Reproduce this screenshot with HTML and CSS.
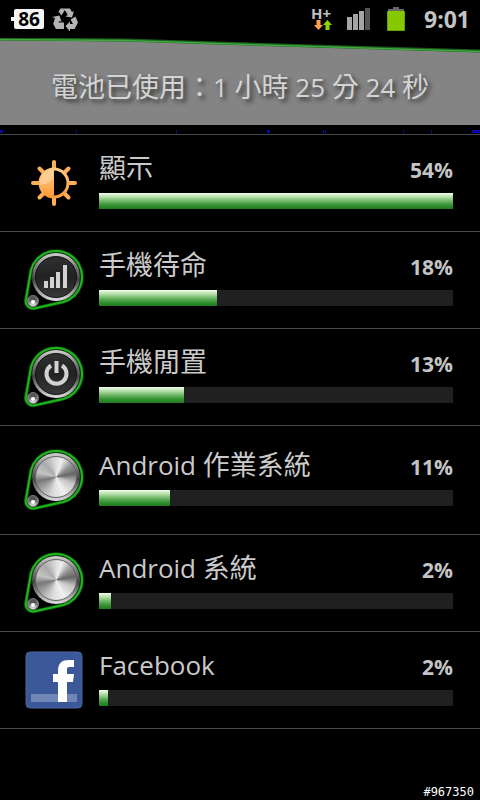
FILE: index.html
```html
<!DOCTYPE html>
<html lang="zh-Hant">
<head>
    <meta charset="UTF-8">
    <meta name="viewport" content="width=device-width, initial-scale=1.0">
    <title>電池使用狀況</title>
    <link rel="stylesheet" href="styles.css">
</head>
<body>
    <!-- Shared shapes -->
    <svg class="defs" aria-hidden="true">
        <defs>
            <linearGradient id="ring" x1="0" y1="0" x2="0" y2="1">
                <stop offset="0" stop-color="#d2d2d2"/>
                <stop offset="0.25" stop-color="#888"/>
                <stop offset="0.55" stop-color="#444"/>
                <stop offset="0.8" stop-color="#999"/>
                <stop offset="1" stop-color="#e0e0e0"/>
            </linearGradient>
            <linearGradient id="stud" x1="0" y1="0" x2="0" y2="1">
                <stop offset="0" stop-color="#555"/>
                <stop offset="0.3" stop-color="#aaa"/>
                <stop offset="0.5" stop-color="#666"/>
                <stop offset="1" stop-color="#fff"/>
            </linearGradient>
            <linearGradient id="sun" x1="0" y1="0" x2="0" y2="1">
                <stop offset="0" stop-color="#ffc988"/>
                <stop offset="1" stop-color="#ff9c38"/>
            </linearGradient>
        </defs>
        <symbol id="knob" viewBox="0 0 62 62">
            <path d="M3 50L8 21A26 26 0 1 1 40 53L11 59.500A7.500 7.500 0 0 1 3 50Z" fill="#000" stroke="#0a4d0a" stroke-width="3.500"/>
            <path d="M3 50L8 21A26 26 0 1 1 40 53L11 59.500A7.500 7.500 0 0 1 3 50Z" fill="none" stroke="#1fb51f" stroke-width="2"/>
            <circle cx="33" cy="28" r="24" fill="url(#ring)"/>
            <circle cx="10" cy="52" r="5.500" fill="url(#stud)" stroke="#777"/>
            <path d="M6 51a4 4 0 0 1 8 0z" fill="#555"/>
            <circle cx="10" cy="53" r="2" fill="#fff"/>
        </symbol>
    </svg>

    <header class="status-bar">
        <div class="status-left">
            <div class="level">86</div>
            <svg width="26" height="24" viewBox="0 0 26 24" fill="#b4b4b4" aria-hidden="true">
                <path d="M9.500 1.500H18L20 5l2-1-2 6.500-6.500-1 2.200-1.500L13.500 4 11.500 3z"/>
                <path d="M6.500 4.500L9 1l3.500 2.500-3 5z"/>
                <path d="M0 10l7.500-1.500 2 6.500-2-1L5 17.500l-3.500-1.500 1.500-5z"/>
                <path d="M1 16.500l2.500-1h8.500V22H4z"/>
                <path d="M18.500 12.500L23.500 9.500 26 15.500 22.500 22H18v2.500L13.500 19 18 14.500v2.500h3z"/>
            </svg>
        </div>
        <div class="status-right">
            <div class="network">
                <span>H+</span>
                <svg width="18" height="11" viewBox="0 0 18 11" aria-hidden="true">
                    <path d="M2.500 0h4v5H9L4.500 10 0 5h2.500z" fill="#ff9f4c"/>
                    <path d="M11.500 10h4V5H18L13.500 0 9 5h2.500z" fill="#90d400"/>
                </svg>
            </div>
            <svg class="signal" width="24" height="22" viewBox="0 0 24 22" aria-hidden="true">
                <path d="M0 9h5v13H0zM6 6h5v16H6zM12 3h5v19h-5z" fill="#a5a5a5"/>
                <path d="M18 0h5v22h-5z" fill="#555"/>
            </svg>
            <svg class="battery" width="18" height="24" viewBox="0 0 18 24" aria-hidden="true">
                <path d="M6 0h6v2H6zM1 2h16v2H1z" fill="#696969"/>
                <rect y="4" width="18" height="20" rx="1" fill="#66a800"/>
                <rect x="1" y="4" width="16" height="19" fill="#86c800"/>
            </svg>
            <time class="clock">9:01</time>
        </div>
    </header>

    <main>
        <section class="graph">
            <svg class="graph-line" viewBox="0 0 480 87" preserveAspectRatio="none" aria-hidden="true">
                <path d="M0 2L125 2.500L280 8L480 14V87H0z" fill="#848484"/>
                <path d="M0 1L125 2L280 7L480 13" fill="none" stroke="#1c5c1c" stroke-width="3"/>
                <path d="M0 1.500L125 2.500L280 7.500L480 13.500" fill="none" stroke="#3fa83f" stroke-width="1.500"/>
            </svg>
            <h1>電池已使用：<span class="latin">1 </span>小時<span class="latin"> 25 </span>分<span class="latin"> 24 </span>秒</h1>
        </section>
        <svg class="ticks" viewBox="0 0 480 9" preserveAspectRatio="none" aria-hidden="true">
            <path d="M0 5h3v3H0zM76 5h1v3h-1zM176 5h1v3h-1zM267 5h3v3h-3zM323 5h1v3h-1zM325 5h1v3h-1zM403 5h1v3h-1zM431 5h1v3h-1zM472 5h8v3h-8z" fill="#0a0aac"/>
        </svg>

        <ul class="usage-list">
            <li class="usage">
                <div class="icon">
                    <svg width="46" height="46" viewBox="0 0 46 46" aria-hidden="true">
                        <g stroke="#ffad57" stroke-width="4" stroke-linecap="round">
                            <path d="M8.500 8.500l29 29M37.500 8.500l-29 29M23 2v42M2 23h42"/>
                        </g>
                        <circle cx="23" cy="23" r="14" fill="#000" stroke="url(#sun)" stroke-width="3"/>
                        <path d="M23 9a14 14 0 0 0 0 28z" fill="url(#sun)"/>
                        <path d="M22 10a13 13 0 0 0-13 15q7 0 13-6z" fill="#ffd5a3" opacity="0.700"/>
                    </svg>
                </div>
                <div class="usage-body">
                    <div class="usage-title"><h2>顯示</h2><span class="percent">54%</span></div>
                    <div class="bar"><div class="bar-fill" style="width: 100%"></div></div>
                </div>
            </li>
            <li class="usage">
                <div class="icon">
                    <svg width="62" height="62" aria-hidden="true"><use href="#knob"/></svg>
                    <div class="face face-dark">
                        <svg width="42" height="42" viewBox="0 0 42 42" fill="#d2d2d2" aria-hidden="true">
                            <path d="M9 25h4v7H9zM15 21h4v11h-4zM21 16h4v16h-4zM28 9h4v23h-4z"/>
                        </svg>
                    </div>
                </div>
                <div class="usage-body">
                    <div class="usage-title"><h2>手機待命</h2><span class="percent">18%</span></div>
                    <div class="bar"><div class="bar-fill" style="width: 33.3%"></div></div>
                </div>
            </li>
            <li class="usage">
                <div class="icon">
                    <svg width="62" height="62" aria-hidden="true"><use href="#knob"/></svg>
                    <div class="face face-dark">
                        <svg width="42" height="42" viewBox="0 0 42 42" fill="none" stroke="#d2d2d2" stroke-width="4" aria-hidden="true">
                            <path d="M16 12.500a10 10 0 1 0 11 0M21.500 8v12"/>
                        </svg>
                    </div>
                </div>
                <div class="usage-body">
                    <div class="usage-title"><h2>手機閒置</h2><span class="percent">13%</span></div>
                    <div class="bar"><div class="bar-fill" style="width: 24%"></div></div>
                </div>
            </li>
            <li class="usage usage-tall">
                <div class="icon">
                    <svg width="62" height="62" aria-hidden="true"><use href="#knob"/></svg>
                    <div class="face face-metal"></div>
                </div>
                <div class="usage-body">
                    <div class="usage-title"><h2><span class="latin">Android </span>作業系統</h2><span class="percent">11%</span></div>
                    <div class="bar"><div class="bar-fill" style="width: 20%"></div></div>
                </div>
            </li>
            <li class="usage">
                <div class="icon">
                    <svg width="62" height="62" aria-hidden="true"><use href="#knob"/></svg>
                    <div class="face face-metal"></div>
                </div>
                <div class="usage-body">
                    <div class="usage-title"><h2><span class="latin">Android </span>系統</h2><span class="percent">2%</span></div>
                    <div class="bar"><div class="bar-fill" style="width: 3.4%"></div></div>
                </div>
            </li>
            <li class="usage">
                <div class="icon">
                    <svg width="58" height="58" viewBox="0 0 58 58" aria-hidden="true">
                        <rect x="1" y="1" width="56" height="56" rx="4" fill="#3b5998" stroke="#4a66a0"/>
                        <rect x="6" y="43" width="46" height="8" fill="#7086b6"/>
                        <path d="M33 51V31h-5v-8h5v-3c0-8 4-11 11-11h5v7h-4c-3 0-3 1-3 3v4h7l-1 8h-6v20z" fill="#fff"/>
                    </svg>
                </div>
                <div class="usage-body">
                    <div class="usage-title"><h2><span class="latin">Facebook</span></h2><span class="percent">2%</span></div>
                    <div class="bar"><div class="bar-fill" style="width: 2.5%"></div></div>
                </div>
            </li>
        </ul>
    </main>

    <footer class="footer">#967350</footer>
</body>
</html>
```

FILE: styles.css
```css
* {
    margin: 0;
    padding: 0;
    box-sizing: border-box;
}

body {
    font-family: 'Open Sans', 'Noto Sans CJK TC', sans-serif;
    background: #000;
    color: #cacaca;
    min-height: 100vh;
    display: flex;
    flex-direction: column;
}

svg {
    display: block;
}

.defs {
    position: absolute;
    width: 0;
    height: 0;
}

.latin {
    font-size: 26px;
}

/* Status bar */
.status-bar {
    display: flex;
    justify-content: space-between;
    align-items: center;
    height: 38px;
    padding: 0 10px 0 14px;
}

.status-left,
.status-right {
    display: flex;
    align-items: center;
}

.status-left {
    gap: 8px;
}

.level {
    position: relative;
    width: 30px;
    height: 20px;
    border-radius: 2px;
    background: #f4f4f4;
    color: #000;
    font-size: 19px;
    font-weight: bold;
    line-height: 20px;
    text-align: center;
}

.level::before {
    content: '';
    position: absolute;
    left: -3px;
    top: 8px;
    width: 3px;
    height: 4px;
    background: #f4f4f4;
}

.network {
    width: 20px;
    margin-right: 16px;
    font-size: 15px;
    font-weight: bold;
    line-height: 13px;
    color: #c0c0c0;
}

.network span {
    display: block;
}

.network svg {
    margin-left: 3px;
}

.signal {
    margin-right: 16px;
}

.battery {
    margin-right: 19px;
}

.clock {
    font-size: 23px;
    font-weight: bold;
    line-height: 38px;
    color: #c4c4c4;
}

/* Battery graph */
.graph {
    position: relative;
    height: 87px;
    display: flex;
    justify-content: center;
    align-items: center;
    padding-top: 10px;
}

.graph-line {
    position: absolute;
    inset: 0;
    width: 100%;
    height: 100%;
}

.graph h1 {
    position: relative;
    font-size: 27px;
    font-weight: normal;
    line-height: 36px;
    white-space: pre;
    color: #d4d4d4;
    text-shadow: 3px 3px 4px #333;
}

.ticks {
    width: 100%;
    height: 9px;
}

/* Usage list */
.usage-list {
    list-style: none;
    border-top: 1px solid #484848;
}

.usage {
    display: flex;
    align-items: center;
    gap: 14px;
    min-height: 97px;
    padding: 0 27px 0 23px;
    border-bottom: 1px solid #484848;
}

.usage-tall {
    min-height: 109px;
}

.icon {
    position: relative;
    flex: none;
    width: 62px;
    height: 62px;
    display: flex;
    justify-content: center;
    align-items: center;
}

.face {
    position: absolute;
    left: 12px;
    top: 7px;
    width: 42px;
    height: 42px;
    border-radius: 50%;
}

.face-dark {
    background: linear-gradient(#303030, #222 50%, #383838);
    border: 1px solid #111;
}

.face-dark svg {
    margin: -1px;
}

.face-metal {
    background: conic-gradient(from 0deg, #ddd, #eee 20deg, #999 50deg, #666 80deg, #c4c4c4 110deg, #f0f0f0 155deg, #ddd 190deg, #aaa 225deg, #777 258deg, #c4c4c4 285deg, #aaa 320deg, #ddd);
    border: 1px solid #666;
}

.usage-body {
    flex: 1;
    margin-top: -7px;
}

.usage-title {
    display: flex;
    justify-content: space-between;
    align-items: baseline;
    height: 36px;
    margin-bottom: 7px;
}

.usage-title h2 {
    font-size: 27px;
    font-weight: normal;
    line-height: 36px;
    white-space: pre;
}

.percent {
    font-size: 21px;
    font-weight: bold;
    line-height: 36px;
    color: #c4c4c4;
}

.bar {
    height: 16px;
    background: #202020;
}

.bar-fill {
    height: 100%;
    background: linear-gradient(#f2ffea, #b5deaa 25%, #62b05c 55%, #2f8e2e 80%, #207a20);
}

.footer {
    margin-top: auto;
    padding-right: 6px;
    font-family: 'DejaVu Sans Mono', monospace;
    font-size: 12px;
    line-height: 16px;
    text-align: right;
    color: #fff;
}
```
